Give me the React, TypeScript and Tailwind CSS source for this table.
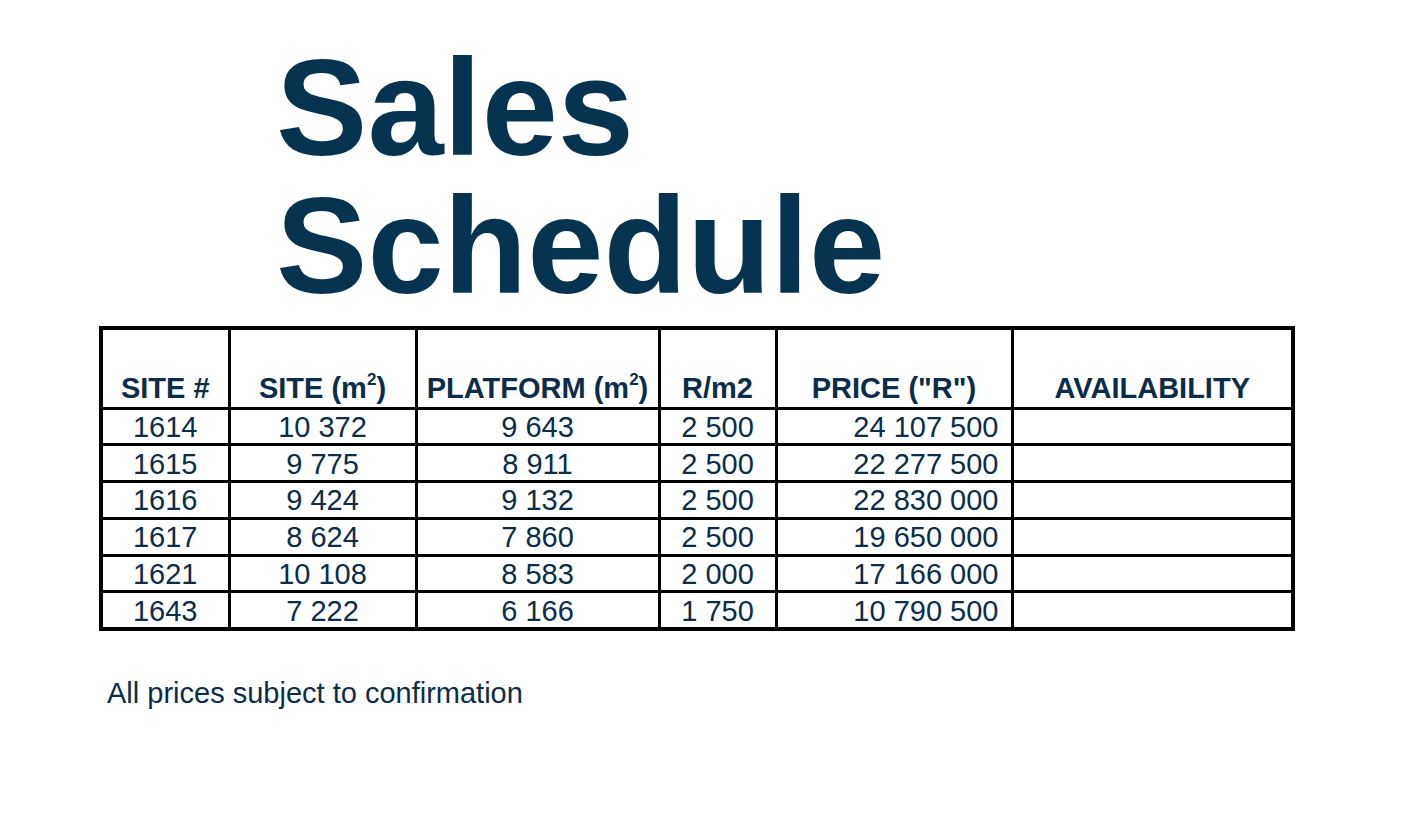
const ROWS = [
  { site: "1614", area: "10 372", platform: "9 643", rate: "2 500", price: "24 107 500" },
  { site: "1615", area: "9 775", platform: "8 911", rate: "2 500", price: "22 277 500" },
  { site: "1616", area: "9 424", platform: "9 132", rate: "2 500", price: "22 830 000" },
  { site: "1617", area: "8 624", platform: "7 860", rate: "2 500", price: "19 650 000" },
  { site: "1621", area: "10 108", platform: "8 583", rate: "2 000", price: "17 166 000" },
  { site: "1643", area: "7 222", platform: "6 166", rate: "1 750", price: "10 790 500" },
];

const Sq = () => <sup className="relative -top-[2px] text-[17px] leading-none align-super">2</sup>;

export default function App() {
  return (
    <div
      className="min-h-[818px] w-[1402px] bg-white pl-[99px] pt-[39px] text-[#0c2c47]"
      style={{ fontFamily: '"Liberation Sans", Arial, sans-serif' }}
    >
      {/* Title */}
      <h1 className="ml-[177px] text-[137px] font-bold leading-[138px] text-[#06334f]">
        Sales
        <br />
        Schedule
      </h1>

      {/* Schedule table */}
      <table className="mt-[11px] w-[1192px] table-fixed border-collapse border-[4px] border-black">
        <colgroup>
          <col className="w-[128px]" />
          <col className="w-[187px]" />
          <col className="w-[243px]" />
          <col className="w-[117px]" />
          <col className="w-[236px]" />
          <col className="w-[281px]" />
        </colgroup>
        <thead>
          <tr className="h-[80px] text-[29px] font-bold leading-none">
            <th className="border-[3px] border-black px-1 pb-[4px] align-bottom">SITE #</th>
            <th className="border-[3px] border-black px-1 pb-[4px] align-bottom">
              SITE (m<Sq />)
            </th>
            <th className="whitespace-nowrap border-[3px] border-black px-0 pb-[4px] align-bottom">
              PLATFORM (m<Sq />)
            </th>
            <th className="border-[3px] border-black px-1 pb-[4px] align-bottom">R/m2</th>
            <th className="border-[3px] border-black px-1 pb-[4px] align-bottom">PRICE ("R")</th>
            <th className="border-[3px] border-black px-1 pb-[4px] align-bottom">AVAILABILITY</th>
          </tr>
        </thead>
        <tbody>
          {ROWS.map((r) => (
            <tr key={r.site} className="h-[36.8px] text-[29px] leading-none">
              <td className="border-[3px] border-black pt-[2px] text-center">{r.site}</td>
              <td className="border-[3px] border-black pt-[2px] text-center">{r.area}</td>
              <td className="border-[3px] border-black pt-[2px] text-center">{r.platform}</td>
              <td className="border-[3px] border-black pt-[2px] text-center">{r.rate}</td>
              <td className="border-[3px] border-black pr-[12px] pt-[2px] text-right">{r.price}</td>
              <td className="border-[3px] border-black"></td>
            </tr>
          ))}
        </tbody>
      </table>

      <p className="ml-[8px] mt-[46px] text-[29px] leading-[32px]">All prices subject to confirmation</p>
    </div>
  );
}
